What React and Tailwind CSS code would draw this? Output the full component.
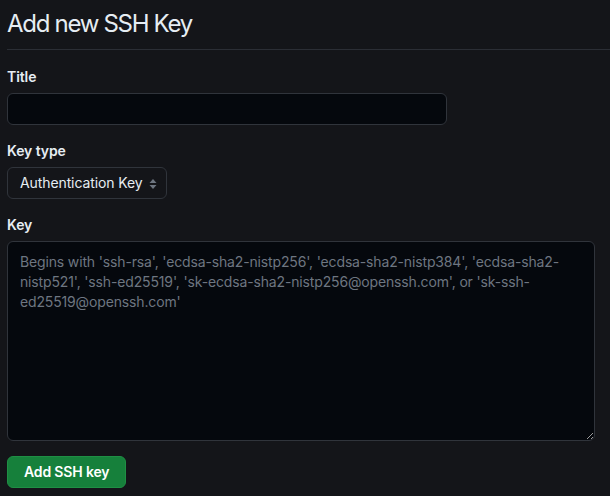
import React from "react";

const font = { fontFamily: "Inter, 'Liberation Sans', sans-serif" };

const Label = ({ children, htmlFor }) => (
  <label htmlFor={htmlFor} className="block text-sm font-semibold leading-[21px] tracking-[-0.1px] text-[#e6edf3] mb-1.5">
    {children}
  </label>
);

export default function App() {
  return (
    <div className="min-h-screen bg-[#141519] pl-[7px] overflow-hidden" style={font}>
      <div className="pt-1.5 pb-[7px] border-b border-[#2b2e35]">
        <h1 className="text-2xl leading-9 font-normal tracking-[-1.3px] text-[#e6edf3]">Add new SSH Key</h1>
      </div>

      <div className="mt-4">
        <Label htmlFor="title">Title</Label>
        <input
          id="title"
          className="block w-[440px] h-8 px-3 rounded-md bg-[#05080d] border border-[#30343b] text-sm text-[#e6edf3] outline-none"
        />
      </div>

      <div className="mt-[15px]">
        <Label htmlFor="type">Key type</Label>
        <div className="relative w-[160px] h-8 rounded-md border border-[#30343b] bg-[#141519] flex items-center">
          <span className="pl-3 text-sm tracking-[-0.1px] text-[#e6edf3]">Authentication Key</span>
          <svg className="absolute right-[9px] top-[10px]" width="8" height="12" viewBox="0 0 8 12">
            <path d="M4 1 L7.5 5 L0.5 5 Z" fill="#6e7681" />
            <path d="M4 11 L7.5 7 L0.5 7 Z" fill="#6e7681" />
          </svg>
        </div>
      </div>

      <div className="mt-[15px]">
        <Label htmlFor="key">Key</Label>
        <textarea
          id="key"
          placeholder="Begins with 'ssh-rsa', 'ecdsa-sha2-nistp256', 'ecdsa-sha2-nistp384', 'ecdsa-sha2-nistp521', 'ssh-ed25519', 'sk-ecdsa-sha2-nistp256@openssh.com', or 'sk-ssh-ed25519@openssh.com'"
          className="block w-[588px] h-[200px] px-3 pt-[10px] rounded-md bg-[#05080d] border border-[#30343b] text-sm leading-5 tracking-[-0.15px] text-[#e6edf3] placeholder:text-[#6e7681] outline-none resize-y"
          style={font}
        />
      </div>

      <button className="mt-[15px] h-8 px-4 rounded-md bg-[#16803b] border border-[#1f8f44] text-sm font-semibold tracking-[-0.15px] text-white">
        Add SSH key
      </button>
    </div>
  );
}
